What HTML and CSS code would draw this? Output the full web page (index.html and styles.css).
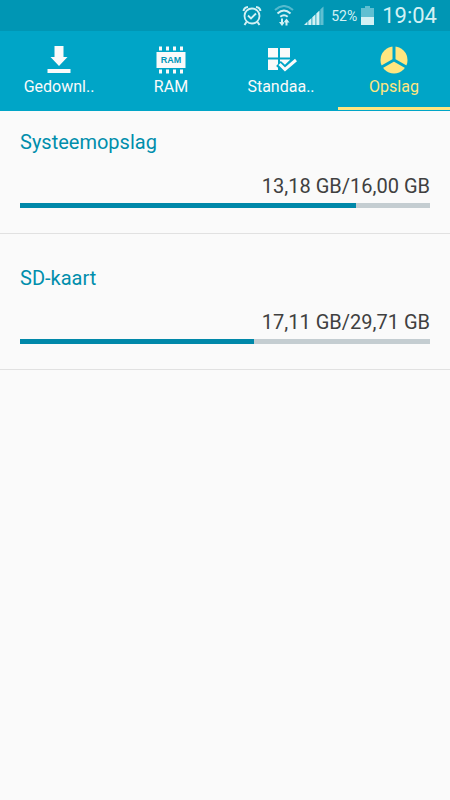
FILE: index.html
```html
<!DOCTYPE html>
<html lang="nl">
<head>
<meta charset="utf-8">
<meta name="viewport" content="width=device-width, initial-scale=1">
<title>Opslag</title>
<link rel="stylesheet" href="styles.css">
</head>
<body>
<header class="status">
  <svg class="alarm" width="20" height="22" viewBox="0 0 20 22" fill="none" stroke="currentColor" aria-hidden="true">
    <circle cx="10" cy="11" r="7.500" stroke-width="1.800"/>
    <path d="M1.500 6Q2 2.500 6 2M14 2q4 .5 4.500 4M4.500 17l-2 3M15.500 17l2 3" stroke-width="2"/>
    <path d="M6 10.500l3 3 5-5" stroke-width="1.800"/>
  </svg>
  <svg class="wifi" width="20" height="22" viewBox="0 0 20 22" fill="none" stroke="currentColor" stroke-width="2" aria-hidden="true">
    <path d="M1 5Q10-3 19 5" opacity=".4"/>
    <path d="M3.500 8.500q6.500-6 13 0M6.300 11.800q3.700-3.200 7.400 0"/>
    <path d="M8 13.500v5M12.500 20.500v-5" stroke-width="2"/>
    <path d="M5 17h6l-3 4zM9.500 17.500h6l-3-4z" fill="currentColor" stroke="none"/>
  </svg>
  <svg class="signal" width="20" height="20" viewBox="0 0 20 20" fill="currentColor" aria-hidden="true">
    <path d="M0 19l3.500-3.500V19zM4.300 15l3.200-3v7H4.300zM8.300 11.200l3.200-3V19H8.300zM12.300 7.500l3.200-3V19h-3.200z"/>
    <path d="M16.300 3.500L19.500.5V19h-3.200z" opacity=".45"/>
  </svg>
  <span class="percent">52%</span>
  <svg class="battery" width="13" height="20" viewBox="0 0 13 20" fill="currentColor" aria-hidden="true">
    <path d="M4 0h5v2h4v9H0V2h4z" opacity=".45"/>
    <path d="M0 11h13v8H0z"/>
  </svg>
  <time class="clock">19:04</time>
</header>
<nav class="tabs">
  <button class="tab tab-downloads" type="button">
    <svg width="30" height="30" viewBox="0 0 30 30" fill="currentColor" aria-hidden="true">
      <path d="M10.500 1h9v11h4L15 21 6.500 12h4zM3.500 24h23v4h-23z"/>
    </svg>
    <span>Gedownl..</span>
  </button>
  <button class="tab tab-ram" type="button">
    <svg width="30" height="30" viewBox="0 0 30 30" fill="currentColor" aria-hidden="true">
      <path d="M.5 7h29v16H.5zM3 1.500h3v4H3zM10 1.500h3v4h-3zM17 1.500h3v4h-3zM24 1.500h3v4h-3zM3 24.500h3v4H3zM10 24.500h3v4h-3zM17 24.500h3v4h-3zM24 24.500h3v4h-3z"/>
      <text class="chip-text" x="15" y="18" text-anchor="middle">RAM</text>
    </svg>
    <span>RAM</span>
  </button>
  <button class="tab tab-defaults" type="button">
    <svg width="30" height="30" viewBox="0 0 30 30" fill="currentColor" aria-hidden="true">
      <path d="M2 3h10v9.500H2zM14 3h10v9.500H14zM2 14.500h10V25H2zM14 14.500h10V25H14z"/>
      <path class="check-gap" d="M12.500 18.500l6.500 6L31 13"/>
      <path class="check" d="M13.500 19l5.500 5.500L30 15"/>
    </svg>
    <span>Standaa..</span>
  </button>
  <button class="tab tab-storage active" type="button" aria-current="page">
    <svg width="30" height="30" viewBox="0 0 30 30" aria-hidden="true">
      <circle cx="15" cy="15" r="13.500" fill="currentColor"/>
      <path class="pie-gap" d="M15 0v15L1 23M15 15l14 8"/>
    </svg>
    <span>Opslag</span>
  </button>
</nav>
<main>
  <section class="storage">
    <h2 id="system">Systeemopslag</h2>
    <p>13,18 GB/16,00 GB</p>
    <div class="track" role="progressbar" aria-labelledby="system" aria-valuenow="82" aria-valuemin="0" aria-valuemax="100"><div class="fill" style="width:82%"></div></div>
  </section>
  <section class="storage">
    <h2 id="card">SD-kaart</h2>
    <p>17,11 GB/29,71 GB</p>
    <div class="track" role="progressbar" aria-labelledby="card" aria-valuenow="57" aria-valuemin="0" aria-valuemax="100"><div class="fill" style="width:57%"></div></div>
  </section>
</main>
</body>
</html>
```
FILE: styles.css
```css
* {
  box-sizing: border-box;
}

body {
  margin: 0;
  min-height: 100vh;
  background: #fafafa;
  color: #404040;
  font-family: Roboto, "Liberation Sans", sans-serif;
}

.status {
  display: flex;
  align-items: center;
  justify-content: flex-end;
  height: 31px;
  padding-right: 13px;
  background: #0096b4;
  color: #d3f1f4;
}

.wifi {
  margin-left: 12px;
}

.signal {
  margin-left: 10px;
}

.percent {
  margin-left: 7px;
  font-size: 14px;
}

.battery {
  margin-left: 4px;
}

.clock {
  margin-left: 8px;
  font-size: 22px;
  line-height: 30px;
}

.tabs {
  display: flex;
  height: 80px;
  padding-bottom: 1px;
  background: #00a5c7;
}

.tab {
  display: flex;
  flex-direction: column;
  align-items: center;
  min-width: 0;
  padding: 14px 0 0;
  border: 0;
  border-bottom: 3px solid transparent;
  background: none;
  color: #fafafa;
  font: inherit;
  font-size: 16px;
  line-height: 24px;
}

.tab svg {
  flex: none;
  overflow: visible;
}

.tab-downloads {
  flex: 59 1 0;
}

.tab-ram {
  flex: 53 1 0;
}

.tab-defaults {
  flex: 57 1 0;
}

.tab-storage {
  flex: 56 1 0;
}

.active {
  border-bottom-color: #ffe680;
  color: #ffe680;
}

.chip-text {
  fill: #0096b8;
  font-family: "Liberation Sans", sans-serif;
  font-size: 9px;
  font-weight: 700;
}

.check,
.check-gap,
.pie-gap {
  fill: none;
  stroke: #00a5c7;
  stroke-width: 3;
}

.check-gap {
  stroke-width: 7;
}

.check {
  stroke: currentColor;
}

.storage {
  padding: 17px 20px 25px;
  border-bottom: 1px solid #e1e1e1;
}

.storage + .storage {
  padding-top: 30px;
}

.storage h2 {
  margin: 0;
  color: #008eac;
  font-size: 20px;
  font-weight: 400;
  line-height: 28px;
}

.storage p {
  margin: 16px 0 3px;
  font-size: 20px;
  line-height: 28px;
  text-align: right;
}

.track {
  height: 5px;
  background: #c4cdd1;
}

.fill {
  height: 100%;
  background: #0088a9;
}
```
